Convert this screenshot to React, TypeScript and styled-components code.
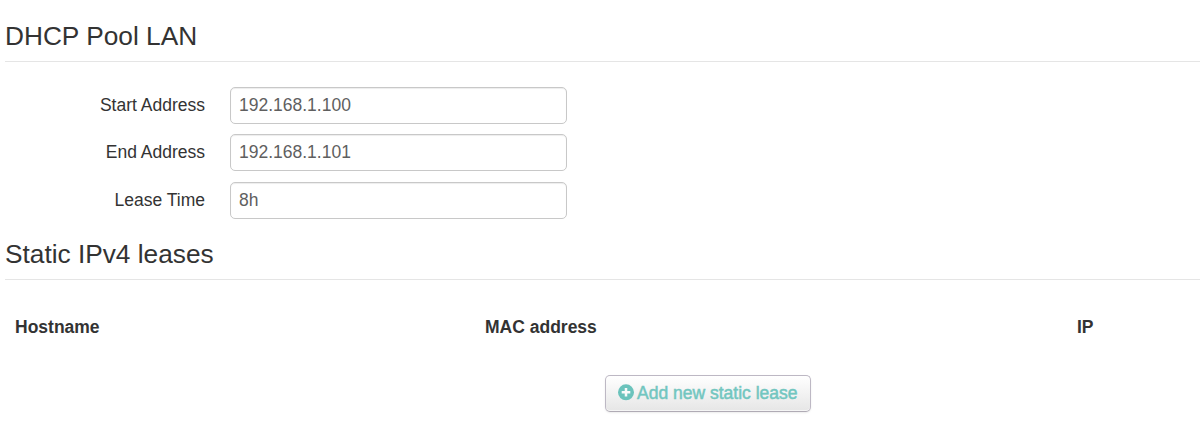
import React from "react";
import styled, { createGlobalStyle } from "styled-components";

const Global = createGlobalStyle`
  *, *::before, *::after { box-sizing: border-box; }
  body { margin: 0; background: #fff; color: #333; font: 17.5px/24px "Liberation Sans", Arial, sans-serif; overflow: hidden; }
`;

const Page = styled.main`
  height: 425px;
  padding: 11px 0 0 5px;
  overflow: hidden;
`;

const Section = styled.section<{ $height: number }>`
  height: ${(p) => p.$height}px;
`;

const Legend = styled.h2`
  margin: 0;
  height: 51px;
  font-size: 26.25px;
  font-weight: 400;
  line-height: 50px;
  border-bottom: 1px solid #e5e5e5;
`;

const Fields = styled.div`
  display: grid;
  gap: 10.4px;
  padding-top: 25px;
`;

const Field = styled.label`
  display: grid;
  grid-template-columns: 200px 337px;
  column-gap: 25px;
  height: 37px;
`;

const FieldName = styled.span`
  text-align: right;
  line-height: 36px;
`;

const Input = styled.input`
  height: 37px;
  width: 337px;
  margin: 0;
  padding: 0 8px;
  border: 1px solid #c8c8c8;
  border-radius: 5px;
  background: #fff;
  box-shadow: inset 0 1px 1px rgba(0, 0, 0, 0.075);
  color: #5f5f5f;
  font: inherit;
  outline: none;
`;

const Columns = styled.div`
  display: grid;
  grid-template-columns: 470px 592px 1fr;
  padding: 35px 0 0 10px;
  font-weight: 700;
`;

const Actions = styled.div`
  padding: 36px 0 0 600px;
`;

const AddButton = styled.button`
  display: flex;
  align-items: center;
  gap: 3px;
  width: 206px;
  height: 37px;
  padding: 0 0 2px 12px;
  border: 1px solid #bdb8c4;
  border-bottom-color: #b0abb5;
  border-radius: 5px;
  background: linear-gradient(#fff, #e6e6e6);
  box-shadow: inset 0 1px 0 rgba(255, 255, 255, 0.2), inset 0 -1px 0 rgba(255, 255, 255, 0.6),
    0 1px 2px rgba(0, 0, 0, 0.08);
  color: #72c6c0;
  font: inherit;
  white-space: nowrap;
  -webkit-text-stroke: 0.5px #72c6c0;
`;

const PlusIcon = styled.svg`
  flex: none;
  width: 16px;
  height: 17px;
  margin-bottom: 1px;
`;

const fields = [
  ["Start Address", "192.168.1.100"],
  ["End Address", "192.168.1.101"],
  ["Lease Time", "8h"],
];

export default function App() {
  return (
    <>
      <Global />
      <Page>
        <Section $height={218}>
          <Legend>DHCP Pool LAN</Legend>
          <Fields>
            {fields.map(([name, value]) => (
              <Field key={name}>
                <FieldName>{name}</FieldName>
                <Input defaultValue={value} />
              </Field>
            ))}
          </Fields>
        </Section>
        <Section $height={196}>
          <Legend>Static IPv4 leases</Legend>
          <Columns>
            <span>Hostname</span>
            <span>MAC address</span>
            <span>IP</span>
          </Columns>
          <Actions>
            <AddButton>
              <PlusIcon viewBox="0 0 16 17">
                <circle cx="8" cy="8.3" r="8" fill="#6bc3bc" />
                <path d="M8 4v8.6M3.7 8.3h8.6" stroke="#fafafa" strokeWidth="2.5" />
              </PlusIcon>
              Add new static lease
            </AddButton>
          </Actions>
        </Section>
      </Page>
    </>
  );
}
